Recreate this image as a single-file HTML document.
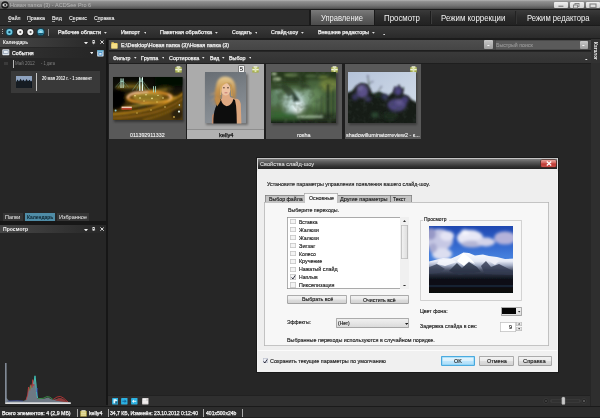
<!DOCTYPE html><html><head><meta charset="utf-8"><title>ACDSee Pro 6</title><style>
html,body{margin:0;padding:0;background:#262626;}
#app{position:relative;width:600px;height:418px;overflow:hidden;background:#262626;font-family:"Liberation Sans", "DejaVu Sans", sans-serif;}
#app div,#app span.t,#app svg{position:absolute;}
#app span.t{white-space:nowrap;transform-origin:0 50%;line-height:1;}
</style></head><body><div id="app">
<div style="left:0px;top:0px;width:600px;height:10.4px;background:#1c1c1c;"></div>
<div style="left:0px;top:0px;width:600px;height:9px;background:linear-gradient(#c2c2c2 0,#9a9a9a 9%,#8c8c8c 22%,#747474 62%,#565656 92%,#444 100%);"></div>
<svg style="left:1px;top:1px" width="8" height="8" viewBox="0 0 8 8"><circle cx="4" cy="4" r="3.8" fill="#1c1c1c"/><ellipse cx="4" cy="4" rx="2.6" ry="1.7" fill="#d8d8d8"/><circle cx="4.3" cy="4" r="1.1" fill="#222"/></svg>
<div style="left:554px;top:1.6px;width:13.8px;height:6.9px;background:linear-gradient(#f0f0f0,#d4d4d4);border-radius:1px;"></div>
<div style="left:570px;top:1.6px;width:13.5px;height:6.9px;background:linear-gradient(#f0f0f0,#d4d4d4);border-radius:1px;"></div>
<div style="left:585.5px;top:1.6px;width:14.5px;height:6.9px;background:linear-gradient(#f0f0f0,#d4d4d4);border-radius:1px;"></div>
<svg style="left:554px;top:2px" width="46" height="7" viewBox="0 0 46 7"><rect x="4.4" y="3.6" width="5" height="1.4" fill="#8a8a8a"/><rect x="21" y="1.5" width="4" height="3" fill="none" stroke="#808080" stroke-width="0.9"/><rect x="19.5" y="3" width="4" height="3" fill="#ddd" stroke="#808080" stroke-width="0.9"/><rect x="36" y="2" width="6" height="3.6" fill="none" stroke="#808080" stroke-width="1.1"/></svg>
<div style="left:0px;top:10.4px;width:310px;height:14.6px;background:#2b2b2b;"></div>
<div style="left:0px;top:25px;width:600px;height:1px;background:#1b1b1b;"></div>
<div style="left:8px;top:20.5px;width:3.4px;height:0.6px;background:#a0a0a0;"></div>
<div style="left:27.5px;top:20.5px;width:3.4px;height:0.6px;background:#a0a0a0;"></div>
<div style="left:52px;top:20.5px;width:3.4px;height:0.6px;background:#a0a0a0;"></div>
<div style="left:72px;top:20.5px;width:3.4px;height:0.6px;background:#a0a0a0;"></div>
<div style="left:97px;top:20.5px;width:3.4px;height:0.6px;background:#a0a0a0;"></div>
<div style="left:310px;top:10px;width:290px;height:15px;background:linear-gradient(#3a3a3a,#2a2a2a 50%,#222 100%);"></div>
<div style="left:309px;top:10px;width:1.5px;height:15px;background:#1a1a1a;"></div>
<div style="left:311px;top:10px;width:62.5px;height:15px;background:linear-gradient(#7a7a7a,#626262 45%,#4c4c4c 100%);"></div>
<div style="left:373.5px;top:10px;width:1px;height:15px;background:#1a1a1a;"></div>
<div style="left:430px;top:11px;width:1px;height:13px;background:#1c1c1c;"></div>
<div style="left:431px;top:11px;width:1px;height:13px;background:#3c3c3c;"></div>
<div style="left:515px;top:11px;width:0.8px;height:13px;background:#222222;"></div>
<div style="left:515.8px;top:11px;width:0.8px;height:13px;background:#343434;"></div>
<div style="left:0px;top:26px;width:600px;height:11.6px;background:linear-gradient(#393939,#323232 50%,#2a2a2a);"></div>
<div style="left:0px;top:37.6px;width:600px;height:2.8px;background:#1c1c1c;"></div>
<div style="left:2.2px;top:29.4px;width:1.3px;height:1px;background:#a8a8a8;"></div>
<div style="left:2.2px;top:31.4px;width:1.3px;height:1px;background:#a8a8a8;"></div>
<div style="left:2.2px;top:33.4px;width:1.3px;height:1px;background:#a8a8a8;"></div>
<svg style="left:5px;top:27px" width="42" height="11" viewBox="0 0 42 11"><circle cx="4.4" cy="5.1" r="4" fill="#0e4254"/><circle cx="4.4" cy="5.1" r="3" fill="#70c8e2"/><circle cx="4.4" cy="5.1" r="1.2" fill="#11485c"/><circle cx="15.1" cy="5.1" r="3.9" fill="#1b1b1b"/><circle cx="15.1" cy="5.1" r="3.1" fill="#f0f0f0"/><circle cx="15.3" cy="5.1" r="1.1" fill="#5a5a5a"/><circle cx="25.4" cy="5.1" r="3.9" fill="#1b1b1b"/><circle cx="25.4" cy="5.1" r="3.1" fill="#f0f0f0"/><circle cx="25.6" cy="5.1" r="1.1" fill="#5a5a5a"/><circle cx="35.7" cy="5.1" r="4" fill="#0e4254"/><circle cx="35.7" cy="5.1" r="3" fill="#70c8e2"/><path d="M32.8 5.9 L38.6 5.9 Q38 8 35.7 8.1 Q33.4 8 32.8 5.9 Z" fill="#165a74"/><path d="M34 5.6 Q35.7 3 37.4 5.6 Z" fill="#d0f0f8"/></svg>
<div style="left:48px;top:28.6px;width:0.9px;height:7.6px;background:#8a8a8a;"></div>
<svg style="left:104.2px;top:31.8px" width="2.8" height="1.7999999999999998" viewBox="0 0 2.8 1.7999999999999998"><path d="M0 0 L2.8 0 L1.4 1.7999999999999998 Z" fill="#e0e0e0"/></svg>
<svg style="left:143.6px;top:31.8px" width="2.8" height="1.7999999999999998" viewBox="0 0 2.8 1.7999999999999998"><path d="M0 0 L2.8 0 L1.4 1.7999999999999998 Z" fill="#e0e0e0"/></svg>
<svg style="left:215.0px;top:31.8px" width="2.8" height="1.7999999999999998" viewBox="0 0 2.8 1.7999999999999998"><path d="M0 0 L2.8 0 L1.4 1.7999999999999998 Z" fill="#e0e0e0"/></svg>
<svg style="left:254.6px;top:31.8px" width="2.8" height="1.7999999999999998" viewBox="0 0 2.8 1.7999999999999998"><path d="M0 0 L2.8 0 L1.4 1.7999999999999998 Z" fill="#e0e0e0"/></svg>
<svg style="left:301.0px;top:31.8px" width="2.8" height="1.7999999999999998" viewBox="0 0 2.8 1.7999999999999998"><path d="M0 0 L2.8 0 L1.4 1.7999999999999998 Z" fill="#e0e0e0"/></svg>
<svg style="left:372.2px;top:31.8px" width="2.8" height="1.7999999999999998" viewBox="0 0 2.8 1.7999999999999998"><path d="M0 0 L2.8 0 L1.4 1.7999999999999998 Z" fill="#e0e0e0"/></svg>
<svg style="left:382.8px;top:33.8px" width="2.4" height="1.6" viewBox="0 0 2.4 1.6"><path d="M0 0 L2.4 0 L1.2 1.6 Z" fill="#e0e0e0"/></svg>
<div style="left:0px;top:40px;width:106px;height:365px;background:#262626;"></div>
<div style="left:106px;top:40px;width:2.3px;height:365px;background:#161616;"></div>
<div style="left:0px;top:37.6px;width:106px;height:9px;background:linear-gradient(90deg,#464646,#3c3c3c 35%,#2c2c2c 80%,#282828);"></div>
<svg style="left:83.6px;top:41.7px" width="4" height="2.4" viewBox="0 0 4 2.4"><path d="M0 0 L4 0 L2 2.4 Z" fill="#f0f0f0"/></svg>
<svg style="left:92.2px;top:40.0px" width="3.6" height="4.6" viewBox="0 0 5 6"><rect x="1.2" y="0.6" width="2.4" height="3.2" fill="none" stroke="#f0f0f0" stroke-width="0.9"/><rect x="0.4" y="3.6" width="4" height="0.8" fill="#f0f0f0"/><rect x="2" y="4.2" width="0.8" height="1.6" fill="#f0f0f0"/></svg>
<svg style="left:99.6px;top:40.4px" width="4.2" height="4.2" viewBox="0 0 5 5"><path d="M0.5 0.5 L4.5 4.5 M4.5 0.5 L0.5 4.5" stroke="#f4f4f4" stroke-width="1.1"/></svg>
<div style="left:0px;top:47.6px;width:106px;height:10px;background:linear-gradient(90deg,#333,#2b2b2b 50%,#252525);"></div>
<svg style="left:2.4px;top:49.4px" width="8" height="7" viewBox="0 0 8 7"><rect x="0.3" y="0.3" width="7" height="6" rx="0.8" fill="#dfe6ee"/><rect x="1.2" y="1.4" width="5.2" height="3.4" fill="#7f8fa6"/><rect x="1.8" y="2" width="4" height="2.2" fill="#e8eef4"/></svg>
<svg style="left:89.8px;top:52.1px" width="3.6" height="2.2" viewBox="0 0 3.6 2.2"><path d="M0 0 L3.6 0 L1.8 2.2 Z" fill="#f0f0f0"/></svg>
<svg style="left:97px;top:49.6px" width="7" height="7" viewBox="0 0 7 7"><rect x="0.2" y="0.2" width="6.4" height="6.2" rx="0.6" fill="#dcecf8"/><rect x="0.2" y="0.2" width="6.4" height="1.4" fill="#4aa0c8"/><rect x="1.8" y="2.4" width="3.2" height="2.8" fill="none" stroke="#3a86c4" stroke-width="0.8"/></svg>
<div style="left:4.2px;top:61.8px;width:3.8px;height:3px;background:#3a3a3a;"></div>
<div style="left:12.6px;top:60px;width:1.3px;height:7.8px;background:#b9b9b9;"></div>
<div style="left:11px;top:71.1px;width:89px;height:22px;background:#393939;"></div>
<svg style="left:16px;top:75.6px" width="16" height="12.6" viewBox="0 0 16 12.6"><defs><filter id="bc"><feGaussianBlur stdDeviation="0.5"/></filter></defs><rect width="16" height="12.6" fill="#0e141c"/><rect width="16" height="6.2" fill="#8ea2be"/><g filter="url(#bc)"><path d="M0 6 L1.5 3.6 L3 5.4 L4.5 2.8 L6 5 L7.5 3.6 L9 5.6 L10.5 3 L12 5.2 L13.5 3.8 L15 5.4 L16 4.4 L16 12.6 L0 12.6 Z" fill="#121a22"/></g></svg>
<div style="left:35.6px;top:73px;width:1.4px;height:17.6px;background:#c4c4c4;"></div>
<div style="left:3px;top:212.7px;width:20.4px;height:8px;background:#353535;"></div>
<div style="left:25px;top:212.7px;width:30px;height:8px;background:#4f8ca6;"></div>
<div style="left:56.6px;top:212.7px;width:32.4px;height:8px;background:#353535;"></div>
<div style="left:0px;top:221px;width:106px;height:4px;background:#171717;"></div>
<div style="left:0px;top:225px;width:106px;height:8.4px;background:linear-gradient(90deg,#464646,#3c3c3c 35%,#2c2c2c 80%,#282828);"></div>
<svg style="left:83.6px;top:228.6px" width="4" height="2.4" viewBox="0 0 4 2.4"><path d="M0 0 L4 0 L2 2.4 Z" fill="#f0f0f0"/></svg>
<svg style="left:92.2px;top:226.9px" width="3.6" height="4.6" viewBox="0 0 5 6"><rect x="1.2" y="0.6" width="2.4" height="3.2" fill="none" stroke="#f0f0f0" stroke-width="0.9"/><rect x="0.4" y="3.6" width="4" height="0.8" fill="#f0f0f0"/><rect x="2" y="4.2" width="0.8" height="1.6" fill="#f0f0f0"/></svg>
<svg style="left:99.6px;top:227.3px" width="4.2" height="4.2" viewBox="0 0 5 5"><path d="M0.5 0.5 L4.5 4.5 M4.5 0.5 L0.5 4.5" stroke="#f4f4f4" stroke-width="1.1"/></svg>
<div style="left:108.3px;top:40px;width:482px;height:355px;background:#262626;"></div>
<div style="left:108.5px;top:40.3px;width:482px;height:9.4px;background:linear-gradient(#4e4e4e,#454545);"></div>
<svg style="left:111.4px;top:40.8px" width="7" height="8" viewBox="0 0 7 8"><path d="M0.4 1.2 L2.6 1.2 L3.2 2 L6.4 2 L6.4 7.4 L0.4 7.4 Z" fill="#f0d060"/><rect x="0.4" y="2.8" width="6" height="4.6" fill="#f6e08a"/></svg>
<div style="left:484.4px;top:40.4px;width:8.2px;height:9px;background:linear-gradient(#c8c8c8,#9c9c9c);border-radius:1px;"></div>
<svg style="left:487.1px;top:44.5px" width="2.8" height="1.7999999999999998" viewBox="0 0 2.8 1.7999999999999998"><path d="M0 0 L2.8 0 L1.4 1.7999999999999998 Z" fill="#f4f4f4"/></svg>
<div style="left:494.6px;top:40.2px;width:94px;height:9.6px;background:#5a5a5a;box-shadow:inset 0 0 0 0.6px #3a3a3a;"></div>
<div style="left:579.6px;top:40.6px;width:8.4px;height:8.8px;background:linear-gradient(#c8c8c8,#9c9c9c);border-radius:1px;"></div>
<svg style="left:582.4px;top:44.5px" width="2.8" height="1.7999999999999998" viewBox="0 0 2.8 1.7999999999999998"><path d="M0 0 L2.8 0 L1.4 1.7999999999999998 Z" fill="#f4f4f4"/></svg>
<div style="left:108.5px;top:49.7px;width:482px;height:1.8px;background:#1e1e1e;"></div>
<div style="left:108.5px;top:51.5px;width:482px;height:11.6px;background:linear-gradient(#3a3a3a,#333333);"></div>
<div style="left:108.5px;top:63.1px;width:482px;height:1px;background:#1e1e1e;"></div>
<svg style="left:134.3px;top:57.1px" width="2.6" height="1.7000000000000002" viewBox="0 0 2.6 1.7000000000000002"><path d="M0 0 L2.6 0 L1.3 1.7000000000000002 Z" fill="#e8e8e8"/></svg>
<svg style="left:161.7px;top:57.1px" width="2.6" height="1.7000000000000002" viewBox="0 0 2.6 1.7000000000000002"><path d="M0 0 L2.6 0 L1.3 1.7000000000000002 Z" fill="#e8e8e8"/></svg>
<svg style="left:202.3px;top:57.1px" width="2.6" height="1.7000000000000002" viewBox="0 0 2.6 1.7000000000000002"><path d="M0 0 L2.6 0 L1.3 1.7000000000000002 Z" fill="#e8e8e8"/></svg>
<svg style="left:222.3px;top:57.1px" width="2.6" height="1.7000000000000002" viewBox="0 0 2.6 1.7000000000000002"><path d="M0 0 L2.6 0 L1.3 1.7000000000000002 Z" fill="#e8e8e8"/></svg>
<svg style="left:248.7px;top:57.1px" width="2.6" height="1.7000000000000002" viewBox="0 0 2.6 1.7000000000000002"><path d="M0 0 L2.6 0 L1.3 1.7000000000000002 Z" fill="#e8e8e8"/></svg>
<svg style="left:585.1px;top:58.8px" width="2.6" height="1.7000000000000002" viewBox="0 0 2.6 1.7000000000000002"><path d="M0 0 L2.6 0 L1.3 1.7000000000000002 Z" fill="#e8e8e8"/></svg>
<div style="left:590.6px;top:40px;width:9.4px;height:367px;background:#2e2e2e;"></div>
<div style="left:590.6px;top:38.6px;width:9.4px;height:24.3px;background:#323232;"></div>
<div style="left:108.3px;top:63.4px;width:313px;height:75.8px;background:#1f1f1f;"></div>
<div style="left:109.2px;top:64.2px;width:76.60000000000001px;height:74.4px;background:#595959;"></div>
<div style="left:187.4px;top:64.2px;width:76.99999999999997px;height:74.4px;background:#ababab;"></div>
<div style="left:266.2px;top:64.2px;width:76.30000000000001px;height:74.4px;background:#595959;"></div>
<div style="left:344.6px;top:64.2px;width:76.19999999999999px;height:74.4px;background:#595959;"></div>
<div style="left:187.4px;top:129.4px;width:77px;height:0.8px;background:#8e8e8e;"></div>
<div style="left:187.4px;top:130.2px;width:77px;height:8.4px;background:#b2b2b2;"></div>
<svg style="left:174.8px;top:66.2px" width="7" height="7" viewBox="0 0 7 7"><rect x="0.3" y="1" width="6.4" height="5.6" fill="#a9b24e"/><rect x="1.6" y="0.2" width="3.8" height="1.6" fill="#e8ead0"/><rect x="0.3" y="2.8" width="6.4" height="1.5" fill="#eef2d8"/><rect x="2.6" y="1.4" width="1.8" height="4.6" fill="#dfe6b4"/></svg>
<svg style="left:252.3px;top:66px" width="7" height="7" viewBox="0 0 7 7"><rect x="0.3" y="1" width="6.4" height="5.6" fill="#a9b24e"/><rect x="1.6" y="0.2" width="3.8" height="1.6" fill="#e8ead0"/><rect x="0.3" y="2.8" width="6.4" height="1.5" fill="#eef2d8"/><rect x="2.6" y="1.4" width="1.8" height="4.6" fill="#dfe6b4"/></svg>
<svg style="left:331.2px;top:65.8px" width="7" height="7" viewBox="0 0 7 7"><rect x="0.3" y="1" width="6.4" height="5.6" fill="#a9b24e"/><rect x="1.6" y="0.2" width="3.8" height="1.6" fill="#e8ead0"/><rect x="0.3" y="2.8" width="6.4" height="1.5" fill="#eef2d8"/><rect x="2.6" y="1.4" width="1.8" height="4.6" fill="#dfe6b4"/></svg>
<svg style="left:409.6px;top:65.8px" width="7" height="7" viewBox="0 0 7 7"><rect x="0.3" y="1" width="6.4" height="5.6" fill="#a9b24e"/><rect x="1.6" y="0.2" width="3.8" height="1.6" fill="#e8ead0"/><rect x="0.3" y="2.8" width="6.4" height="1.5" fill="#eef2d8"/><rect x="2.6" y="1.4" width="1.8" height="4.6" fill="#dfe6b4"/></svg>
<div style="left:238.8px;top:66.2px;width:5.6px;height:5.6px;background:#f4f4f4;box-shadow:0 0 0 0.5px #555;"></div>
<div style="left:114.2px;top:78px;width:69.5px;height:43.5px;background:rgba(30,30,30,0.6);filter:blur(0.8px);"></div>
<svg style="left:113px;top:76.5px" width="69.5" height="43.5" viewBox="0 0 69.5 43.5">
<defs><filter id="b1" x="-20%" y="-20%" width="140%" height="140%"><feGaussianBlur stdDeviation="0.55"/></filter>
<filter id="b2" x="-20%" y="-20%" width="140%" height="140%"><feGaussianBlur stdDeviation="1.5"/></filter>
<filter id="b3" x="-20%" y="-20%" width="140%" height="140%"><feGaussianBlur stdDeviation="0.9"/></filter>
<linearGradient id="g1" x1="0" y1="0" x2="0" y2="1"><stop offset="0" stop-color="#070905"/><stop offset="0.3" stop-color="#14120a"/><stop offset="0.55" stop-color="#3a2a08"/><stop offset="1" stop-color="#4a3409"/></linearGradient>
<clipPath id="c1"><rect width="69.5" height="43.5"/></clipPath></defs>
<g clip-path="url(#c1)">
<rect width="69.5" height="43.5" fill="url(#g1)"/>
<g filter="url(#b2)">
<ellipse cx="37" cy="20.6" rx="24" ry="7.4" fill="#6c4c0c"/>
<ellipse cx="34" cy="19.6" rx="13" ry="3.4" fill="#8a7420"/>
<path d="M-2 35 Q30 33 50 26 Q62 21 72 14 L72 46 L-2 46 Z" fill="#553c0a"/>
<path d="M-2 13 L11 13 L13 24 L8 31 L-2 33 Z" fill="#020302"/>
<rect x="42" y="-3" width="30" height="12" fill="#050705"/>
<ellipse cx="19" cy="9.4" rx="15" ry="3.6" fill="#4a3c0c"/>
<ellipse cx="64" cy="37" rx="6" ry="6" fill="#2c2008"/>
<ellipse cx="27" cy="27" rx="7" ry="2.6" fill="#2a3414"/>
<ellipse cx="52" cy="12" rx="8" ry="2.4" fill="#3a3410"/>
</g>
<g filter="url(#b3)">
<ellipse cx="36.8" cy="20.4" rx="22.2" ry="5.5" fill="none" stroke="#f4a030" stroke-width="1.8"/>
<path d="M55.4 17.4 Q59.8 20.2 55.4 23.4" stroke="#ffc8a0" stroke-width="1.5" fill="none"/>
<path d="M14.6 21.2 Q15 17.2 23 15.6 Q29 14.8 35 15" stroke="#ffd0b0" stroke-width="1.6" fill="none"/>
<ellipse cx="35" cy="20" rx="14.4" ry="3.1" fill="none" stroke="#d8b848" stroke-width="1"/>
<path d="M-2 37.4 Q30 35.4 50 27.6 Q62 22.6 71 16" stroke="#d8981c" stroke-width="1.5" fill="none"/>
<path d="M-2 41.4 Q34 39.6 54 31 Q64 26.6 71 21" stroke="#9a6812" stroke-width="1.4" fill="none"/>
<path d="M8 31.4 Q30 27.6 48 24.4 Q58 22.4 63 19.4" stroke="#d0a834" stroke-width="1.1" fill="none"/>
<path d="M30 43 Q52 38 68 28" stroke="#a87818" stroke-width="1" fill="none"/>
<path d="M3 10.4 Q20 8 30 11.6 Q40 14.6 54 12.4" stroke="#c09a34" stroke-width="0.9" fill="none"/>
</g>
<g filter="url(#b1)">
<rect x="8.6" y="29.6" width="10.2" height="1.5" fill="#f0c8b8"/><rect x="8.6" y="31.1" width="10.2" height="1.5" fill="#c8402c"/><circle cx="22" cy="18.8" r="0.8" fill="#f4e890"/><circle cx="27" cy="21.0" r="0.8" fill="#f4e890"/><circle cx="33" cy="17.8" r="0.7" fill="#f0f0a0"/><circle cx="39" cy="21.4" r="0.8" fill="#f4e890"/><circle cx="45" cy="18.4" r="0.7" fill="#e8e090"/><circle cx="50" cy="21.0" r="0.7" fill="#f4e890"/><circle cx="31" cy="24" r="0.7" fill="#e0c860"/><circle cx="44" cy="25" r="0.7" fill="#e0c860"/><circle cx="52" cy="30" r="0.7" fill="#e8d070"/><circle cx="38" cy="33" r="0.7" fill="#d8b850"/><circle cx="24" cy="36" r="0.7" fill="#d8b850"/>
<rect x="7.5" y="1.4" width="1" height="9.6" fill="#d0f4e4"/><rect x="9.6" y="1.4" width="1" height="9.6" fill="#d0f4e4"/><rect x="7.5" y="4" width="3" height="0.8" fill="#c0e8d8"/>
<rect x="26.2" y="0.2" width="1.2" height="13.6" fill="#e8fff4"/><rect x="28.8" y="0.2" width="1.2" height="13.6" fill="#e8fff4"/><rect x="26.2" y="3.6" width="3.8" height="0.9" fill="#d8f8e8"/>
<rect x="40" y="9.2" width="0.9" height="6.2" fill="#a8dcc4"/><rect x="42" y="9.2" width="0.9" height="6.2" fill="#a8dcc4"/>
<path d="M9 2.6 L2.4 10.4 M9 2.6 L15.6 10.4 M9 2.6 L5.6 10.4 M9 2.6 L12.4 10.4" stroke="#6aa088" stroke-width="0.45"/>
<path d="M28 1.6 L19.4 13.4 M28 1.6 L36.6 13.4 M28 1.6 L23.6 13.4 M28 1.6 L32.4 13.4" stroke="#7ab49c" stroke-width="0.45"/>
<circle cx="2.6" cy="33.6" r="1" fill="#88c8d8"/><circle cx="66" cy="34.6" r="1.1" fill="#e4f4e8"/><circle cx="61" cy="40" r="0.9" fill="#c8a848"/><circle cx="66.4" cy="28" r="0.8" fill="#d0e8f0"/>
</g>
</g>
</svg>
<div style="left:206.2px;top:73.6px;width:41.6px;height:51.4px;background:rgba(60,60,60,0.55);filter:blur(0.8px);"></div>
<svg style="left:205px;top:72.3px" width="41.4" height="51.4" viewBox="0 0 41.4 51.4">
<defs><filter id="k1" x="-20%" y="-20%" width="140%" height="140%"><feGaussianBlur stdDeviation="0.5"/></filter>
<filter id="k2" x="-20%" y="-20%" width="140%" height="140%"><feGaussianBlur stdDeviation="0.9"/></filter>
<linearGradient id="kg" x1="0" y1="0" x2="0.25" y2="1"><stop offset="0" stop-color="#676d73"/><stop offset="0.5" stop-color="#7b8187"/><stop offset="1" stop-color="#8b9197"/></linearGradient>
<linearGradient id="kh" x1="0" y1="0" x2="0" y2="1"><stop offset="0" stop-color="#e6cc94"/><stop offset="0.45" stop-color="#c8964f"/><stop offset="1" stop-color="#a87438"/></linearGradient>
<clipPath id="kc"><rect width="41.4" height="51.4"/></clipPath></defs>
<g clip-path="url(#kc)">
<rect width="41.4" height="51.4" fill="url(#kg)"/>
<g filter="url(#k2)">
<path d="M20 4.4 Q13 4.6 11.4 12 Q9.6 19 9.6 26 Q10 31 11.6 33.6 L16 31 L16 16 L25 11 L27 19 L27.4 27.6 L30.2 27.6 Q31.6 20 30.2 12.4 Q28 4.4 20 4.4 Z" fill="url(#kh)"/>
<path d="M10 21 L5.6 22.6 M9.8 26 L5.8 29.4 M10.4 30 L7.6 33" stroke="#c8a070" stroke-width="0.9"/>
</g>
<g filter="url(#k1)">
<path d="M29 27 Q34.6 25.6 35.8 32 L36.4 52 L30 52 Z" fill="#dba67e"/>
<path d="M17.4 21 L24.4 21 L25 25 L30 27 L31 30 L30 34.4 L13 34.4 L12.6 30 L17 26.6 Z" fill="#dfa982"/>
<ellipse cx="20.7" cy="17.3" rx="4.7" ry="6.2" fill="#edc2a2"/>
<path d="M15 16 Q16.2 9.2 25.4 10.4 Q20 10.8 17.4 14 Q16.4 18 16.2 23 L15 23 Z" fill="#d6aa64"/>
<path d="M26.8 13 Q24.8 10.4 22 10.4 Q25.4 12.4 25.6 17 L26 24 L27.6 24 Z" fill="#c89850"/>
<path d="M18 15.8 L19.8 15.8 M22 15.8 L24 15.8" stroke="#4a3428" stroke-width="0.9"/>
<path d="M19.6 20.8 L22.4 20.8" stroke="#b86464" stroke-width="0.8"/>
<path d="M7.2 43 L9 41.6 L9.4 52 L6.8 52 Z" fill="#c48c6c"/>
<path d="M14.2 28.6 L15.8 27 Q17 33 21.6 34.2 Q27 33.4 28.4 27 L30 28 Q31.6 34 31.6 42 L31.8 52 L8.4 52 Q8.2 42 10.4 36 Q12.2 31.6 14.2 28.6 Z" fill="#09090b"/>
<path d="M10 27 Q11.4 32 12.2 34.4 Q14.6 31.6 15.8 28 Q14 25.6 11.6 24 Z" fill="#be8a4a"/>
</g>
</g>
</svg>
<div style="left:272.2px;top:73.4px;width:65.4px;height:51.4px;background:rgba(40,40,40,0.6);filter:blur(0.8px);"></div>
<svg style="left:271px;top:72px" width="65.4" height="51.3" viewBox="0 0 65.4 51.3">
<defs><filter id="r1" x="-20%" y="-20%" width="140%" height="140%"><feGaussianBlur stdDeviation="0.8"/></filter>
<filter id="r2" x="-20%" y="-20%" width="140%" height="140%"><feGaussianBlur stdDeviation="2.2"/></filter>
<filter id="rn" x="0" y="0" width="100%" height="100%"><feTurbulence type="fractalNoise" baseFrequency="0.16" numOctaves="2" seed="7" result="n"/><feColorMatrix in="n" type="matrix" values="0 0 0 0 0.06  0 0 0 0 0.1  0 0 0 0 0.05  0 0 0 -2.6 1.4"/></filter>
<clipPath id="rc"><rect width="65.4" height="51.3"/></clipPath></defs>
<g clip-path="url(#rc)">
<rect width="65.4" height="51.3" fill="#46623a"/>
<g filter="url(#r2)">
<rect x="-4" y="-4" width="74" height="16" fill="#28381f"/>
<rect x="36" y="8" width="34" height="36" fill="#4a663e"/>
<ellipse cx="23" cy="30" rx="11.5" ry="12" fill="#aac6bc"/>
<ellipse cx="26.5" cy="34" rx="6.4" ry="7" fill="#dcecec"/>
<ellipse cx="27" cy="38" rx="4" ry="3" fill="#f4fcfc"/>
<ellipse cx="4" cy="26" rx="6" ry="9" fill="#5e8262"/>
<ellipse cx="8" cy="18" rx="3.4" ry="2.6" fill="#88a896"/>
<rect x="-4" y="40" width="30" height="7" fill="#356633"/>
<rect x="-4" y="47.4" width="74" height="8" fill="#141e16"/>
<rect x="44" y="41" width="26" height="8" fill="#263624"/>
<ellipse cx="58" cy="13" rx="9" ry="6" fill="#74863c"/>
<ellipse cx="44" cy="26" rx="7" ry="10" fill="#628456"/>
<ellipse cx="36" cy="25" rx="4" ry="9" fill="#84a488"/>
</g>
<g filter="url(#r1)">
<ellipse cx="6" cy="7" rx="4.4" ry="2" fill="#92a480"/>
<ellipse cx="3" cy="2" rx="3" ry="1.4" fill="#a8b898"/>
<ellipse cx="20" cy="3" rx="7" ry="1.8" fill="#607848"/>
<ellipse cx="40" cy="4" rx="6" ry="1.8" fill="#4a623a"/>
<ellipse cx="52" cy="5" rx="5" ry="2" fill="#5a6e34"/>
<path d="M12 11 Q21 15 25.6 23.6 Q20 21.6 17 25.6 Q14 17.6 7 15 Z" fill="#2a3c26" opacity="0.8"/>
<path d="M21 21 Q27 23.6 29.4 30 Q25 27.6 22.6 31 Z" fill="#30443a"/>
<path d="M0 10 Q8 12 12 16 Q6 18 0 17 Z" fill="#34482c"/>
<path d="M28 10 Q36 11 40 16 Q34 15 30 16 Z" fill="#30442a"/>
<rect x="26" y="43.6" width="26" height="2.2" fill="#a0b89c"/>
<rect x="56.2" y="12" width="1.7" height="34" fill="#182016"/>
<rect x="61.6" y="18" width="1.2" height="27" fill="#24301d"/>
<rect x="50" y="24" width="0.9" height="19" fill="#31432d"/>
<rect x="45.4" y="26" width="0.7" height="17" fill="#3a4e38"/>
</g>
<rect width="65.4" height="51.3" filter="url(#rn)" opacity="0.45"/>
</g>
</svg>
<div style="left:348.8px;top:73.4px;width:68.7px;height:51.4px;background:rgba(40,40,40,0.6);filter:blur(0.8px);"></div>
<svg style="left:347.6px;top:72px" width="68.7" height="51.3" viewBox="0 0 68.7 51.3">
<defs><filter id="l1" x="-20%" y="-20%" width="140%" height="140%"><feGaussianBlur stdDeviation="0.8"/></filter>
<filter id="l2" x="-20%" y="-20%" width="140%" height="140%"><feGaussianBlur stdDeviation="1.5"/></filter>
<filter id="ln" x="0" y="0" width="100%" height="100%"><feTurbulence type="fractalNoise" baseFrequency="0.2" numOctaves="2" seed="3" result="n"/><feColorMatrix in="n" type="matrix" values="0 0 0 0 0.05  0 0 0 0 0.07  0 0 0 0 0.06  0 0 0 -2.6 1.4"/></filter>
<linearGradient id="lg" x1="0" y1="0" x2="1" y2="1"><stop offset="0" stop-color="#b4c2d8"/><stop offset="0.45" stop-color="#c4d0e2"/><stop offset="1" stop-color="#d6dfea"/></linearGradient>
<clipPath id="lc"><rect width="68.7" height="51.3"/></clipPath>
<clipPath id="lb"><path d="M-2 21 L4 19 L8 14 L13 11 L19 12 L22 16 L24 21 L28 22 L31 20 L36 22 L40 24 L45 20 L47 14 L49 17 L51 12 L53 17 L56 15 L55 22 L60 24 L64 28 L70 31 L70 54 L-2 54 Z"/></clipPath></defs>
<g clip-path="url(#lc)">
<rect width="68.7" height="51.3" fill="url(#lg)"/>
<g filter="url(#l1)">
<path d="M-2 21 L4 19 L8 14 L13 11 L19 12 L22 16 L24 21 L28 22 L31 20 L36 22 L40 24 L45 20 L47 14 L49 17 L51 12 L53 17 L56 15 L55 22 L60 24 L64 28 L70 31 L70 54 L-2 54 Z" fill="#141b15"/>
<path d="M21 18 L20.4 8 L19.6 3.4 M21 12 L24 9.6 M30 20 L33 15" stroke="#465048" stroke-width="0.8" fill="none"/>
<circle cx="19.8" cy="4" r="1.1" fill="#7a7e9a"/><circle cx="24.6" cy="9.6" r="0.9" fill="#7a7e9a"/><circle cx="33.4" cy="14.6" r="0.9" fill="#7a7e9a"/>
</g>
<g filter="url(#l2)">
<ellipse cx="14.4" cy="19" rx="6" ry="7" fill="#5a5088"/>
<ellipse cx="12" cy="16" rx="3" ry="3" fill="#6c6298"/>
<ellipse cx="7" cy="25" rx="3" ry="3.4" fill="#38345e"/>
<ellipse cx="20" cy="27" rx="3" ry="2.6" fill="#3a3466"/>
<ellipse cx="50" cy="19" rx="4.2" ry="4.4" fill="#4e4482"/>
<ellipse cx="49" cy="33" rx="9.6" ry="6.4" fill="#4c447c"/>
<ellipse cx="52" cy="30" rx="4" ry="3" fill="#625890"/>
<ellipse cx="57" cy="27.6" rx="3.6" ry="3.6" fill="#463e7a"/>
<ellipse cx="37" cy="25" rx="3" ry="3" fill="#363860"/>
<ellipse cx="27" cy="43" rx="4" ry="3" fill="#28442f"/>
<ellipse cx="30" cy="23" rx="4" ry="2.4" fill="#1c2e22"/>
<ellipse cx="42" cy="44" rx="8" ry="4" fill="#1a2a1e"/>
</g>
<g clip-path="url(#lb)"><rect width="68.7" height="51.3" filter="url(#ln)" opacity="0.3"/></g>
</g>
</svg>
<div style="left:255.8px;top:157.1px;width:303.59999999999997px;height:216.00000000000003px;background:#1a1a1a;"></div>
<div style="left:256.8px;top:158.1px;width:301.59999999999997px;height:214.00000000000003px;background:#eeeeee;"></div>
<div style="left:256.8px;top:158.1px;width:301.59999999999997px;height:10.6px;background:linear-gradient(#8a8a8a,#5c5c5c 35%,#333 75%,#222 100%);"></div>
<div style="left:256.8px;top:158.1px;width:301.59999999999997px;height:0.8px;background:#c4c4c4;"></div>
<div style="left:256.8px;top:158.1px;width:1.6px;height:214.00000000000003px;background:linear-gradient(#cfcfcf,#e4e4e4 12px,#f4f4f4 14px);"></div>
<div style="left:556.6px;top:158.1px;width:1.8px;height:214.00000000000003px;background:linear-gradient(#cfcfcf,#e4e4e4 12px,#f4f4f4 14px);"></div>
<div style="left:256.8px;top:369.70000000000005px;width:301.59999999999997px;height:2.4px;background:#f2f2f2;"></div>
<div style="left:541px;top:160px;width:15.4px;height:7.4px;background:linear-gradient(#e8a49c,#d2605a 45%,#c03a34 55%,#c8504a);border-radius:1.2px;box-shadow:0 0 0 0.6px #5a2018;"></div>
<svg style="left:546px;top:161.4px" width="6" height="5" viewBox="0 0 6 5"><path d="M0.8 0.5 L5.2 4.5 M5.2 0.5 L0.8 4.5" stroke="#fff" stroke-width="1.3"/></svg>
<div style="left:258.4px;top:350px;width:298.2px;height:0.8px;background:#fbfbfb;"></div>
<div style="left:258.4px;top:350.8px;width:298.2px;height:19px;background:#f0f0f0;"></div>
<div style="left:265px;top:194.6px;width:147px;height:8px;background:#c4c4c4;box-shadow:inset 0 0 0 0.7px #7e7e7e;"></div>
<div style="left:303.8px;top:194.6px;width:0.7px;height:8px;background:#7e7e7e;"></div>
<div style="left:390px;top:194.6px;width:0.7px;height:8px;background:#7e7e7e;"></div>
<div style="left:264.3px;top:202.2px;width:284.8px;height:144.2px;background:#f7f7f7;box-shadow:inset 0 0 0 0.8px #b4b4b4;"></div>
<div style="left:304.2px;top:193.2px;width:33.4px;height:10px;background:#f7f7f7;box-shadow:inset 0.7px 0.7px 0 0 #a8a8a8, inset -0.7px 0 0 0 #a8a8a8;"></div>
<div style="left:286.6px;top:216.6px;width:122.8px;height:72.8px;background:#ffffff;box-shadow:inset 0 0 0 0.7px #8e8e8e;"></div>
<div style="left:290.3px;top:218.9px;width:5.5px;height:5.6px;background:#f4f4f4;box-shadow:inset 0 0 0 0.7px #c4c4c4;"></div>
<div style="left:290.3px;top:226.84px;width:5.5px;height:5.6px;background:#f4f4f4;box-shadow:inset 0 0 0 0.7px #c4c4c4;"></div>
<div style="left:290.3px;top:234.78px;width:5.5px;height:5.6px;background:#f4f4f4;box-shadow:inset 0 0 0 0.7px #c4c4c4;"></div>
<div style="left:290.3px;top:242.72px;width:5.5px;height:5.6px;background:#f4f4f4;box-shadow:inset 0 0 0 0.7px #c4c4c4;"></div>
<div style="left:290.3px;top:250.66px;width:5.5px;height:5.6px;background:#f4f4f4;box-shadow:inset 0 0 0 0.7px #c4c4c4;"></div>
<div style="left:290.3px;top:258.6px;width:5.5px;height:5.6px;background:#f4f4f4;box-shadow:inset 0 0 0 0.7px #c4c4c4;"></div>
<div style="left:290.3px;top:266.54px;width:5.5px;height:5.6px;background:#f4f4f4;box-shadow:inset 0 0 0 0.7px #c4c4c4;"></div>
<div style="left:290.3px;top:274.48px;width:5.5px;height:5.6px;background:#f4f4f4;box-shadow:inset 0 0 0 0.7px #c4c4c4;"></div>
<div style="left:290.3px;top:282.42px;width:5.5px;height:5.6px;background:#f4f4f4;box-shadow:inset 0 0 0 0.7px #c4c4c4;"></div>
<svg style="left:290.8px;top:275.2px" width="5" height="5" viewBox="0 0 5 5"><path d="M0.6 2.4 L1.9 4 L4.2 0.4" stroke="#223" stroke-width="0.9" fill="none"/></svg>
<div style="left:400.4px;top:217.3px;width:8.3px;height:71.4px;background:#f0f0f0;"></div>
<div style="left:400.6px;top:225.4px;width:7.8px;height:33.4px;background:linear-gradient(90deg,#f4f4f4,#dcdcdc);box-shadow:inset 0 0 0 0.6px #a8a8a8;border-radius:1px;"></div>
<svg style="left:403.1px;top:284.6px" width="3.0" height="1.9" viewBox="0 0 3.0 1.9"><path d="M0 0 L3.0 0 L1.5 1.9 Z" fill="#333"/></svg>
<svg style="left:403.1px;top:220.4px" width="3" height="2" viewBox="0 0 3 2"><path d="M0 2 L3 2 L1.5 0 Z" fill="#333"/></svg>
<div style="left:287.2px;top:294.8px;width:60.19999999999999px;height:9.399999999999977px;background:linear-gradient(#f4f4f4,#ebebeb 48%,#dddddd 52%,#d0d0d0);border-radius:1.4px;box-shadow:inset 0 0 0 0.7px #949494;"></div>
<div style="left:350.2px;top:294.8px;width:58.400000000000034px;height:9.399999999999977px;background:linear-gradient(#f4f4f4,#ebebeb 48%,#dddddd 52%,#d0d0d0);border-radius:1.4px;box-shadow:inset 0 0 0 0.7px #949494;"></div>
<div style="left:336.2px;top:318.2px;width:73.2px;height:9.4px;background:linear-gradient(#f2f2f2,#e6e6e6 50%,#d8d8d8);border-radius:1.2px;box-shadow:inset 0 0 0 0.7px #949494;"></div>
<svg style="left:404.6px;top:322.6px" width="3.2" height="2.0" viewBox="0 0 3.2 2.0"><path d="M0 0 L3.2 0 L1.6 2.0 Z" fill="#222"/></svg>
<div style="left:419.6px;top:220px;width:102.8px;height:80.6px;background:transparent;box-shadow:inset 0 0 0 0.7px #c4c4c4;border-radius:1.2px;"></div>
<div style="left:422.6px;top:216px;width:26px;height:7px;background:#f7f7f7;"></div>
<div style="left:500.6px;top:307px;width:21.8px;height:8.6px;background:linear-gradient(#f2f2f2,#dcdcdc);border-radius:1.2px;box-shadow:inset 0 0 0 0.7px #949494;"></div>
<div style="left:502px;top:308.2px;width:14.4px;height:6.2px;background:#050505;"></div>
<svg style="left:518.2px;top:311.0px" width="2.4" height="1.6" viewBox="0 0 2.4 1.6"><path d="M0 0 L2.4 0 L1.2 1.6 Z" fill="#222"/></svg>
<div style="left:499.6px;top:321.6px;width:16.4px;height:10px;background:#ffffff;box-shadow:inset 0 0 0 0.7px #c0c0c0;"></div>
<div style="left:516.4px;top:321.8px;width:5.6px;height:4.7px;background:linear-gradient(#f4f4f4,#d8d8d8);box-shadow:inset 0 0 0 0.6px #b8b8b8;"></div>
<div style="left:516.4px;top:326.7px;width:5.6px;height:4.7px;background:linear-gradient(#f4f4f4,#d8d8d8);box-shadow:inset 0 0 0 0.6px #b8b8b8;"></div>
<svg style="left:518px;top:323.4px" width="2.4" height="1.6" viewBox="0 0 3 2"><path d="M0 2 L3 2 L1.5 0 Z" fill="#444"/></svg>
<svg style="left:518px;top:328.4px" width="2.4" height="1.6" viewBox="0 0 3 2"><path d="M0 0 L3 0 L1.5 2 Z" fill="#444"/></svg>
<div style="left:262.5px;top:358.3px;width:5.4px;height:5.2px;background:#eef0f6;box-shadow:inset 0 0 0 0.7px #c0c4d0;"></div>
<svg style="left:262.9px;top:358.5px" width="5" height="5" viewBox="0 0 5 5"><path d="M0.6 2.4 L1.9 4 L4.2 0.4" stroke="#223" stroke-width="0.9" fill="none"/></svg>
<div style="left:441px;top:356px;width:34px;height:10.199999999999989px;background:linear-gradient(#eaf6fd,#d9f0fc 48%,#bee6fd 52%,#a7d9f5);border-radius:1.4px;box-shadow:inset 0 0 0 0.8px #3c9ed8, inset 0 0 0 1.5px #7fd0f5;"></div>
<div style="left:479.4px;top:356px;width:34.200000000000045px;height:10.199999999999989px;background:linear-gradient(#f4f4f4,#ebebeb 48%,#dddddd 52%,#d0d0d0);border-radius:1.4px;box-shadow:inset 0 0 0 0.7px #949494;"></div>
<div style="left:517.5px;top:356px;width:34.5px;height:10.199999999999989px;background:linear-gradient(#f4f4f4,#ebebeb 48%,#dddddd 52%,#d0d0d0);border-radius:1.4px;box-shadow:inset 0 0 0 0.7px #949494;"></div>
<svg style="left:428.6px;top:225.8px" width="84.6" height="67" viewBox="0 0 84.6 67">
<defs><filter id="m1" x="-20%" y="-20%" width="140%" height="140%"><feGaussianBlur stdDeviation="0.7"/></filter>
<filter id="m2" x="-20%" y="-20%" width="140%" height="140%"><feGaussianBlur stdDeviation="1.5"/></filter>
<linearGradient id="ms" x1="0" y1="0" x2="0" y2="1"><stop offset="0" stop-color="#1f48b0"/><stop offset="0.22" stop-color="#2c5ec8"/><stop offset="0.45" stop-color="#447edc"/></linearGradient>
<linearGradient id="mm" x1="0" y1="0" x2="0" y2="1"><stop offset="0" stop-color="#fbfcff"/><stop offset="0.2" stop-color="#e6eaf6"/><stop offset="0.3" stop-color="#a0aac2"/><stop offset="0.4" stop-color="#4a5268"/><stop offset="0.52" stop-color="#222838"/><stop offset="0.62" stop-color="#0c0e18"/><stop offset="1" stop-color="#05060b"/></linearGradient>
<clipPath id="mc"><rect width="84.6" height="67"/></clipPath></defs>
<g clip-path="url(#mc)">
<rect width="84.6" height="67" fill="url(#ms)"/>
<g filter="url(#m2)">
<ellipse cx="10" cy="14" rx="14" ry="11" fill="#c6c8e4"/>
<ellipse cx="13" cy="28" rx="10" ry="6" fill="#dcdef0"/>
<ellipse cx="18" cy="10" rx="7" ry="5" fill="#e4e4f4"/>
<ellipse cx="2" cy="8" rx="5" ry="6" fill="#9698c6"/>
<ellipse cx="4" cy="22" rx="4" ry="5" fill="#a8aad0"/>
<ellipse cx="41" cy="12" rx="13" ry="8" fill="#e8e8f6"/>
<ellipse cx="43" cy="18" rx="11" ry="3.4" fill="#b4b6d6"/>
<ellipse cx="57" cy="16" rx="9" ry="4.4" fill="#d4d4ea"/>
<ellipse cx="76" cy="12" rx="11" ry="6.6" fill="#b4b2da"/>
<ellipse cx="36" cy="6.4" rx="4" ry="3" fill="#f4f4fc"/>
</g>
<g filter="url(#m1)">
<path d="M-2 36 L6 34 L14 32 L22 32.6 L29 29.4 L34.4 26.6 L40 27 L46 29.6 L54 28.6 L60 30 L68 31 L76 33 L86 32.6 L86 70 L-2 70 Z" fill="url(#mm)"/>
<path d="M20 45 L28 37 L33 42 L40 36 L48 41 L52 46 L30 49 Z" fill="#2c3448" opacity="0.85"/>
<path d="M52 40 L57 35 L62 41 L70 38 L78 42 L86 46 L86 49 L56 48 Z" fill="#323a50" opacity="0.8"/>
<path d="M-2 42 L8 38 L16 43 L10 47 L-2 48 Z" fill="#3a4258" opacity="0.8"/>
<path d="M28 35 L34.4 27 L42 33 L46 38 L40 35 L35 40 Z" fill="#ffffff"/>
<path d="M10 34 L22 33 L28 36 L16 40 L8 38 Z" fill="#f4f6fc" opacity="0.9"/>
<path d="M56 31 L64 31.6 L70 35 L66 39 L60 35 Z" fill="#eef0f8" opacity="0.9"/>
<rect x="-2" y="59" width="90" height="2.2" fill="#182032"/>
</g>
</g>
</svg>
<svg style="left:3px;top:358px" width="70" height="48" viewBox="0 0 70 48">
<defs><filter id="h1"><feGaussianBlur stdDeviation="0.35"/></filter></defs>
<g filter="url(#h1)">
<path d="M2.4 45 L2.5 5 L3.3 5 L3.6 40 L6 43 L20 43 L23 42 L24.6 37 L25.6 29.4 L26.6 33 L28 27 L29 30 L30.2 22 L31 25 L32 18.4 L33 26 L33.6 35 L34.6 40.4 L40 41 L45 39.4 L50 42 L57 40.6 L63 43.4 L68 45 Z" fill="#6e7884"/>
<path d="M23 42 L24.6 37 L25.6 29 L26.6 33 L28 26.6 L28.8 30 L29.8 21.6 L30.6 28" stroke="#c43c3c" stroke-width="0.8" fill="none"/>
<path d="M26.4 33 L27.4 27.6 L28.6 31" stroke="#48b060" stroke-width="0.6" fill="none"/>
<path d="M30.8 26 L32 17.8 L33 26 L33.6 35 L34.6 40" stroke="#40ccc0" stroke-width="0.9" fill="none"/>
<path d="M33.4 34 L34 30 L34.6 38" stroke="#4a5ac8" stroke-width="0.6" fill="none"/>
<path d="M35 40.6 L40 40.4 L44 38.6 L47 39.2 L50 41.6" stroke="#3c9c4c" stroke-width="0.8" fill="none"/>
<path d="M50 41.6 L54 39 L57.4 38.4 L60.4 40 L65 44" stroke="#b83434" stroke-width="0.9" fill="none"/>
<path d="M52 42.4 L55 40.2 L58 40 L61 41.4 L65 44.4 Z" fill="#8e3a3a"/>
<path d="M5 43 L14 42.6 L20 43" stroke="#4a5ab8" stroke-width="0.6" fill="none"/>
<rect x="2.2" y="44.4" width="65.6" height="1.5" fill="#f0f0f0"/>
<rect x="2.4" y="5" width="0.9" height="40" fill="#a4aebe"/>
</g></svg>
<div style="left:108.3px;top:395px;width:482px;height:0.8px;background:#212121;"></div>
<div style="left:108.3px;top:395.8px;width:482px;height:10px;background:#2f2f2f;"></div>
<svg style="left:111.6px;top:398.1px" width="6.6" height="6.6" viewBox="0 0 7 7"><rect x="0.1" y="0.1" width="6.8" height="6.8" rx="0.5" fill="#2cb2e2"/><path d="M1.6 1.4 L4.4 1.4 L5.4 2.6 L5.4 5.6 L1.6 5.6 Z" fill="#e8f8fe"/><path d="M3.4 3.4 L5.8 3.4 L5.8 6 L3.4 6 Z" fill="#1a6a90"/></svg>
<svg style="left:121.4px;top:398.1px" width="6.6" height="6.6" viewBox="0 0 7 7"><rect x="0.1" y="0.1" width="6.8" height="6.8" rx="0.5" fill="#2cb2e2"/><path d="M1.4 3 L3.8 3 L3.8 1.6 L6 3.5 L3.8 5.4 L3.8 4 L1.4 4 Z" fill="#1668a0"/></svg>
<svg style="left:131.4px;top:398.1px" width="6.6" height="6.6" viewBox="0 0 7 7"><rect x="0.1" y="0.1" width="6.8" height="6.8" rx="0.5" fill="#2cb2e2"/><path d="M5.6 3 L3.2 3 L3.2 1.6 L1 3.5 L3.2 5.4 L3.2 4 L5.6 4 Z" fill="#e8f8fe"/></svg>
<svg style="left:142.4px;top:398.1px" width="6.6" height="6.6" viewBox="0 0 7 7"><rect x="0.1" y="0.1" width="6.8" height="6.8" rx="0.5" fill="#d6d2d2"/><rect x="1" y="0.8" width="3.4" height="2" fill="#f4f4f4"/><rect x="0.8" y="3.2" width="5.6" height="2.6" fill="#f0ecec"/></svg>
<svg style="left:542px;top:396px" width="46" height="10" viewBox="0 0 46 10">
<circle cx="4" cy="5" r="2.3" fill="#1a1a1a" stroke="#4a4a4a" stroke-width="0.5"/><rect x="2.8" y="4.6" width="2.4" height="0.8" fill="#777"/>
<rect x="9" y="4" width="29" height="2" fill="#262626" stroke="#555" stroke-width="0.5"/>
<rect x="19.8" y="1" width="3.2" height="7.6" rx="1.2" fill="#c8c8c8" stroke="#888" stroke-width="0.4"/>
<circle cx="42" cy="5" r="2.3" fill="#1a1a1a" stroke="#4a4a4a" stroke-width="0.5"/><rect x="40.8" y="4.6" width="2.4" height="0.8" fill="#777"/><rect x="41.6" y="3.8" width="0.8" height="2.4" fill="#777"/>
</svg>
<div style="left:0px;top:405.6px;width:600px;height:1px;background:#1a1a1a;"></div>
<div style="left:0px;top:406.6px;width:600px;height:11.4px;background:#2c2c2c;"></div>
<div style="left:0px;top:416.6px;width:600px;height:1.4px;background:#1e1e1e;"></div>
<div style="left:77px;top:409px;width:0.9px;height:8px;background:#a8a8a8;"></div>
<div style="left:108.4px;top:409px;width:0.9px;height:8px;background:#a8a8a8;"></div>
<div style="left:203.4px;top:409px;width:0.9px;height:8px;background:#a8a8a8;"></div>
<div style="left:241.6px;top:409px;width:0.9px;height:8px;background:#a8a8a8;"></div>
<svg style="left:80px;top:409.6px" width="7" height="7" viewBox="0 0 7 7"><rect x="0.3" y="1" width="6.4" height="5.6" fill="#c8b850"/><rect x="1.4" y="0.2" width="4.2" height="1.4" fill="#ecebd0"/><rect x="1" y="2.6" width="5" height="1" fill="#f4f2d8"/><rect x="1" y="4.6" width="5" height="0.9" fill="#f4f2d8"/></svg>
<span class="t" style="left:10px;top:3.00px;font-size:5.4px;color:#b8b8b8;transform:scaleX(1.0169);">Новая папка (3) - ACDSee Pro 6</span>
<span class="t" style="left:7.6px;top:16.00px;font-size:5.7px;color:#ececec;transform:scaleX(0.8867);-webkit-text-stroke:0.12px currentColor;">Файл</span>
<span class="t" style="left:27px;top:16.00px;font-size:5.7px;color:#ececec;transform:scaleX(0.9366);-webkit-text-stroke:0.12px currentColor;">Правка</span>
<span class="t" style="left:51.6px;top:16.00px;font-size:5.7px;color:#ececec;transform:scaleX(0.9517);-webkit-text-stroke:0.12px currentColor;">Вид</span>
<span class="t" style="left:68.6px;top:16.00px;font-size:5.7px;color:#ececec;transform:scaleX(0.9136);-webkit-text-stroke:0.12px currentColor;">Сервис</span>
<span class="t" style="left:94px;top:16.00px;font-size:5.7px;color:#ececec;transform:scaleX(0.9143);-webkit-text-stroke:0.12px currentColor;">Справка</span>
<span class="t" style="left:321px;top:14.00px;font-size:8.4px;color:#f2f2f2;transform:scaleX(0.9020);">Управление</span>
<span class="t" style="left:383.6px;top:14.00px;font-size:8.4px;color:#f2f2f2;transform:scaleX(0.9412);">Просмотр</span>
<span class="t" style="left:441px;top:14.00px;font-size:8.4px;color:#f2f2f2;transform:scaleX(0.9421);">Режим коррекции</span>
<span class="t" style="left:527px;top:14.00px;font-size:8.4px;color:#f2f2f2;transform:scaleX(0.9166);">Режим редактора</span>
<span class="t" style="left:58px;top:30.00px;font-size:5.4px;color:#f0f0f0;transform:scaleX(1.0033);-webkit-text-stroke:0.25px currentColor;">Рабочие области</span>
<span class="t" style="left:121px;top:30.00px;font-size:5.4px;color:#f0f0f0;transform:scaleX(1.0075);-webkit-text-stroke:0.25px currentColor;">Импорт</span>
<span class="t" style="left:160px;top:30.00px;font-size:5.4px;color:#f0f0f0;transform:scaleX(1.0202);-webkit-text-stroke:0.25px currentColor;">Пакетная обработка</span>
<span class="t" style="left:232px;top:30.00px;font-size:5.4px;color:#f0f0f0;transform:scaleX(0.9561);-webkit-text-stroke:0.25px currentColor;">Создать</span>
<span class="t" style="left:271px;top:30.00px;font-size:5.4px;color:#f0f0f0;transform:scaleX(0.9659);-webkit-text-stroke:0.25px currentColor;">Слайд-шоу</span>
<span class="t" style="left:318px;top:30.00px;font-size:5.4px;color:#f0f0f0;transform:scaleX(0.9979);-webkit-text-stroke:0.25px currentColor;">Внешние редакторы</span>
<span class="t" style="left:2.5px;top:40.00px;font-size:5.2px;color:#f4f4f4;font-weight:bold;transform:scaleX(0.8994);">Календарь</span>
<span class="t" style="left:11.8px;top:51.00px;font-size:5.3px;color:#f4f4f4;transform:scaleX(0.9920);-webkit-text-stroke:0.25px currentColor;">События</span>
<span class="t" style="left:15.2px;top:61.00px;font-size:5.3px;color:#808080;transform:scaleX(0.8375);">Май 2012</span>
<span class="t" style="left:40.5px;top:61.00px;font-size:5.3px;color:#808080;transform:scaleX(0.7411);">- 1 дата</span>
<span class="t" style="left:41.8px;top:77.00px;font-size:4.8px;color:#f4f4f4;font-weight:bold;transform:scaleX(0.8381);">20 мая 2012 г. - 1 элемент</span>
<span class="t" style="left:5px;top:215.00px;font-size:5.3px;color:#f0f0f0;transform:scaleX(1.0264);">Папки</span>
<span class="t" style="left:27px;top:215.00px;font-size:5.2px;color:#0c222e;font-weight:bold;transform:scaleX(0.9424);">Календарь</span>
<span class="t" style="left:58.7px;top:215.00px;font-size:5.3px;color:#f0f0f0;transform:scaleX(1.0425);">Избранное</span>
<span class="t" style="left:2.5px;top:227.00px;font-size:5.2px;color:#f4f4f4;font-weight:bold;transform:scaleX(0.9840);">Просмотр</span>
<span class="t" style="left:121px;top:43.00px;font-size:5.4px;color:#f0f0f0;transform:scaleX(0.9965);-webkit-text-stroke:0.25px currentColor;">E:\Desktop\Новая папка (3)\Новая папка (3)</span>
<span class="t" style="left:496.4px;top:43.00px;font-size:5.4px;color:#969696;transform:scaleX(0.9696);-webkit-text-stroke:0.12px currentColor;">Быстрый поиск</span>
<span class="t" style="left:113px;top:56.00px;font-size:5.4px;color:#f0f0f0;transform:scaleX(0.9608);-webkit-text-stroke:0.25px currentColor;">Фильтр</span>
<span class="t" style="left:140.6px;top:56.00px;font-size:5.4px;color:#f0f0f0;transform:scaleX(1.0179);-webkit-text-stroke:0.25px currentColor;">Группа</span>
<span class="t" style="left:168.6px;top:56.00px;font-size:5.4px;color:#f0f0f0;transform:scaleX(1.0272);-webkit-text-stroke:0.25px currentColor;">Сортировка</span>
<span class="t" style="left:209.6px;top:56.00px;font-size:5.4px;color:#f0f0f0;transform:scaleX(0.9626);-webkit-text-stroke:0.25px currentColor;">Вид</span>
<span class="t" style="left:229px;top:56.00px;font-size:5.4px;color:#f0f0f0;transform:scaleX(1.0023);-webkit-text-stroke:0.25px currentColor;">Выбор</span>
<span class="t" style="left:597.7px;top:42.2px;font-size:5.4px;color:#f0f0f0;transform-origin:0 0;font-weight:bold;filter:grayscale(1);transform:rotate(90deg) scaleX(0.8616);">Каталог</span>
<span class="t" style="left:129.8px;top:133.00px;font-size:5.3px;color:#f4f4f4;transform:scaleX(1.0006);-webkit-text-stroke:0.12px currentColor;">011392911332</span>
<span class="t" style="left:219.2px;top:133.00px;font-size:5.3px;color:#1a1a1a;transform:scaleX(1.0704);-webkit-text-stroke:0.25px currentColor;">kelly4</span>
<span class="t" style="left:297px;top:133.00px;font-size:5.3px;color:#f4f4f4;transform:scaleX(1.0189);-webkit-text-stroke:0.12px currentColor;">rosha</span>
<span class="t" style="left:345.5px;top:133.00px;font-size:5.3px;color:#f4f4f4;transform:scaleX(1.0223);-webkit-text-stroke:0.12px currentColor;">shadowilluminatorreview2 - к...</span>
<span class="t" style="left:240.2px;top:67.00px;font-size:5.2px;color:#111;font-weight:bold;transform:scaleX(1.0378);">5</span>
<span class="t" style="left:260.4px;top:162.00px;font-size:5.6px;color:#dcdcdc;transform:scaleX(1.0023);-webkit-text-stroke:0.12px currentColor;">Свойства слайд-шоу</span>
<span class="t" style="left:266.5px;top:182.00px;font-size:5.2px;color:#1c1c1c;transform:scaleX(1.0234);-webkit-text-stroke:0.15px currentColor;">Установите параметры управления появления вашего слайд-шоу.</span>
<span class="t" style="left:268.5px;top:197.00px;font-size:5.2px;color:#1c1c1c;transform:scaleX(1.0107);-webkit-text-stroke:0.15px currentColor;">Выбор файла</span>
<span class="t" style="left:308.6px;top:196.00px;font-size:5.2px;color:#1c1c1c;transform:scaleX(1.0071);-webkit-text-stroke:0.15px currentColor;">Основные</span>
<span class="t" style="left:340px;top:197.00px;font-size:5.2px;color:#1c1c1c;transform:scaleX(1.0626);-webkit-text-stroke:0.15px currentColor;">Другие параметры</span>
<span class="t" style="left:393px;top:197.00px;font-size:5.2px;color:#1c1c1c;transform:scaleX(0.9646);-webkit-text-stroke:0.15px currentColor;">Текст</span>
<span class="t" style="left:287.5px;top:208.00px;font-size:5.2px;color:#1c1c1c;transform:scaleX(1.0166);-webkit-text-stroke:0.15px currentColor;">Выберите переходы.</span>
<span class="t" style="left:298.7px;top:220.00px;font-size:5.2px;color:#1c1c1c;transform:scaleX(0.9647);-webkit-text-stroke:0.15px currentColor;">Вставка</span>
<span class="t" style="left:298.7px;top:228.00px;font-size:5.2px;color:#1c1c1c;transform:scaleX(0.9931);-webkit-text-stroke:0.15px currentColor;">Жалюзи</span>
<span class="t" style="left:298.7px;top:236.00px;font-size:5.2px;color:#1c1c1c;transform:scaleX(0.9931);-webkit-text-stroke:0.15px currentColor;">Жалюзи</span>
<span class="t" style="left:298.7px;top:244.00px;font-size:5.2px;color:#1c1c1c;transform:scaleX(1.0844);-webkit-text-stroke:0.15px currentColor;">Зигзаг</span>
<span class="t" style="left:298.7px;top:252.00px;font-size:5.2px;color:#1c1c1c;transform:scaleX(0.9739);-webkit-text-stroke:0.15px currentColor;">Колесо</span>
<span class="t" style="left:298.7px;top:259.00px;font-size:5.2px;color:#1c1c1c;transform:scaleX(1.0270);-webkit-text-stroke:0.15px currentColor;">Кручение</span>
<span class="t" style="left:298.7px;top:267.00px;font-size:5.2px;color:#1c1c1c;transform:scaleX(1.0199);-webkit-text-stroke:0.15px currentColor;">Нажатый слайд</span>
<span class="t" style="left:298.7px;top:275.00px;font-size:5.2px;color:#1c1c1c;transform:scaleX(0.9814);-webkit-text-stroke:0.15px currentColor;">Наплыв</span>
<span class="t" style="left:298.7px;top:283.00px;font-size:5.2px;color:#1c1c1c;transform:scaleX(1.0369);-webkit-text-stroke:0.15px currentColor;">Пикселизация</span>
<span class="t" style="left:301.8px;top:297.00px;font-size:5.2px;color:#1c1c1c;transform:scaleX(1.0192);-webkit-text-stroke:0.15px currentColor;">Выбрать всё</span>
<span class="t" style="left:362.8px;top:298.00px;font-size:5.2px;color:#1c1c1c;transform:scaleX(1.0123);-webkit-text-stroke:0.15px currentColor;">Очистить всё</span>
<span class="t" style="left:287.2px;top:320.00px;font-size:5.2px;color:#1c1c1c;transform:scaleX(0.9508);-webkit-text-stroke:0.15px currentColor;">Эффекты:</span>
<span class="t" style="left:337.8px;top:321.00px;font-size:5.2px;color:#1c1c1c;transform:scaleX(0.9515);-webkit-text-stroke:0.15px currentColor;">(Нет)</span>
<span class="t" style="left:287.2px;top:338.00px;font-size:5.2px;color:#1c1c1c;transform:scaleX(1.0416);-webkit-text-stroke:0.15px currentColor;">Выбранные переходы используются в случайном порядке.</span>
<span class="t" style="left:424px;top:217.00px;font-size:5.2px;color:#1c1c1c;transform:scaleX(0.9450);-webkit-text-stroke:0.15px currentColor;">Просмотр</span>
<span class="t" style="left:420px;top:309.00px;font-size:5.2px;color:#1c1c1c;transform:scaleX(1.0065);-webkit-text-stroke:0.15px currentColor;">Цвет фона:</span>
<span class="t" style="left:420px;top:324.00px;font-size:5.2px;color:#1c1c1c;transform:scaleX(0.9975);-webkit-text-stroke:0.15px currentColor;">Задержка слайда в сек:</span>
<span class="t" style="left:509.4px;top:325.00px;font-size:5.2px;color:#1c1c1c;transform:scaleX(1.0378);-webkit-text-stroke:0.15px currentColor;">9</span>
<span class="t" style="left:270px;top:359.00px;font-size:5.2px;color:#1c1c1c;transform:scaleX(1.0407);-webkit-text-stroke:0.15px currentColor;">Сохранить текущие параметры по умолчанию</span>
<span class="t" style="left:454.2px;top:359.00px;font-size:5.2px;color:#1c1c1c;transform:scaleX(1.0400);-webkit-text-stroke:0.15px currentColor;">OK</span>
<span class="t" style="left:486.6px;top:359.00px;font-size:5.2px;color:#1c1c1c;transform:scaleX(1.0631);-webkit-text-stroke:0.15px currentColor;">Отмена</span>
<span class="t" style="left:523.4px;top:359.00px;font-size:5.2px;color:#1c1c1c;transform:scaleX(1.1101);-webkit-text-stroke:0.15px currentColor;">Справка</span>
<span class="t" style="left:2.4px;top:411.00px;font-size:5.3px;color:#f4f4f4;transform:scaleX(0.9908);-webkit-text-stroke:0.25px currentColor;">Всего элементов: 4  (2,9 МБ)</span>
<span class="t" style="left:89px;top:411.00px;font-size:5.3px;color:#f4f4f4;transform:scaleX(0.9892);-webkit-text-stroke:0.25px currentColor;">kelly4</span>
<span class="t" style="left:110px;top:411.00px;font-size:5.3px;color:#f4f4f4;transform:scaleX(0.9616);-webkit-text-stroke:0.25px currentColor;">34,7 КБ, Изменён: 23.10.2012 0:12:40</span>
<span class="t" style="left:205.6px;top:411.00px;font-size:5.3px;color:#f4f4f4;transform:scaleX(0.9556);-webkit-text-stroke:0.25px currentColor;">401x500x24b</span>
</div></body></html>
